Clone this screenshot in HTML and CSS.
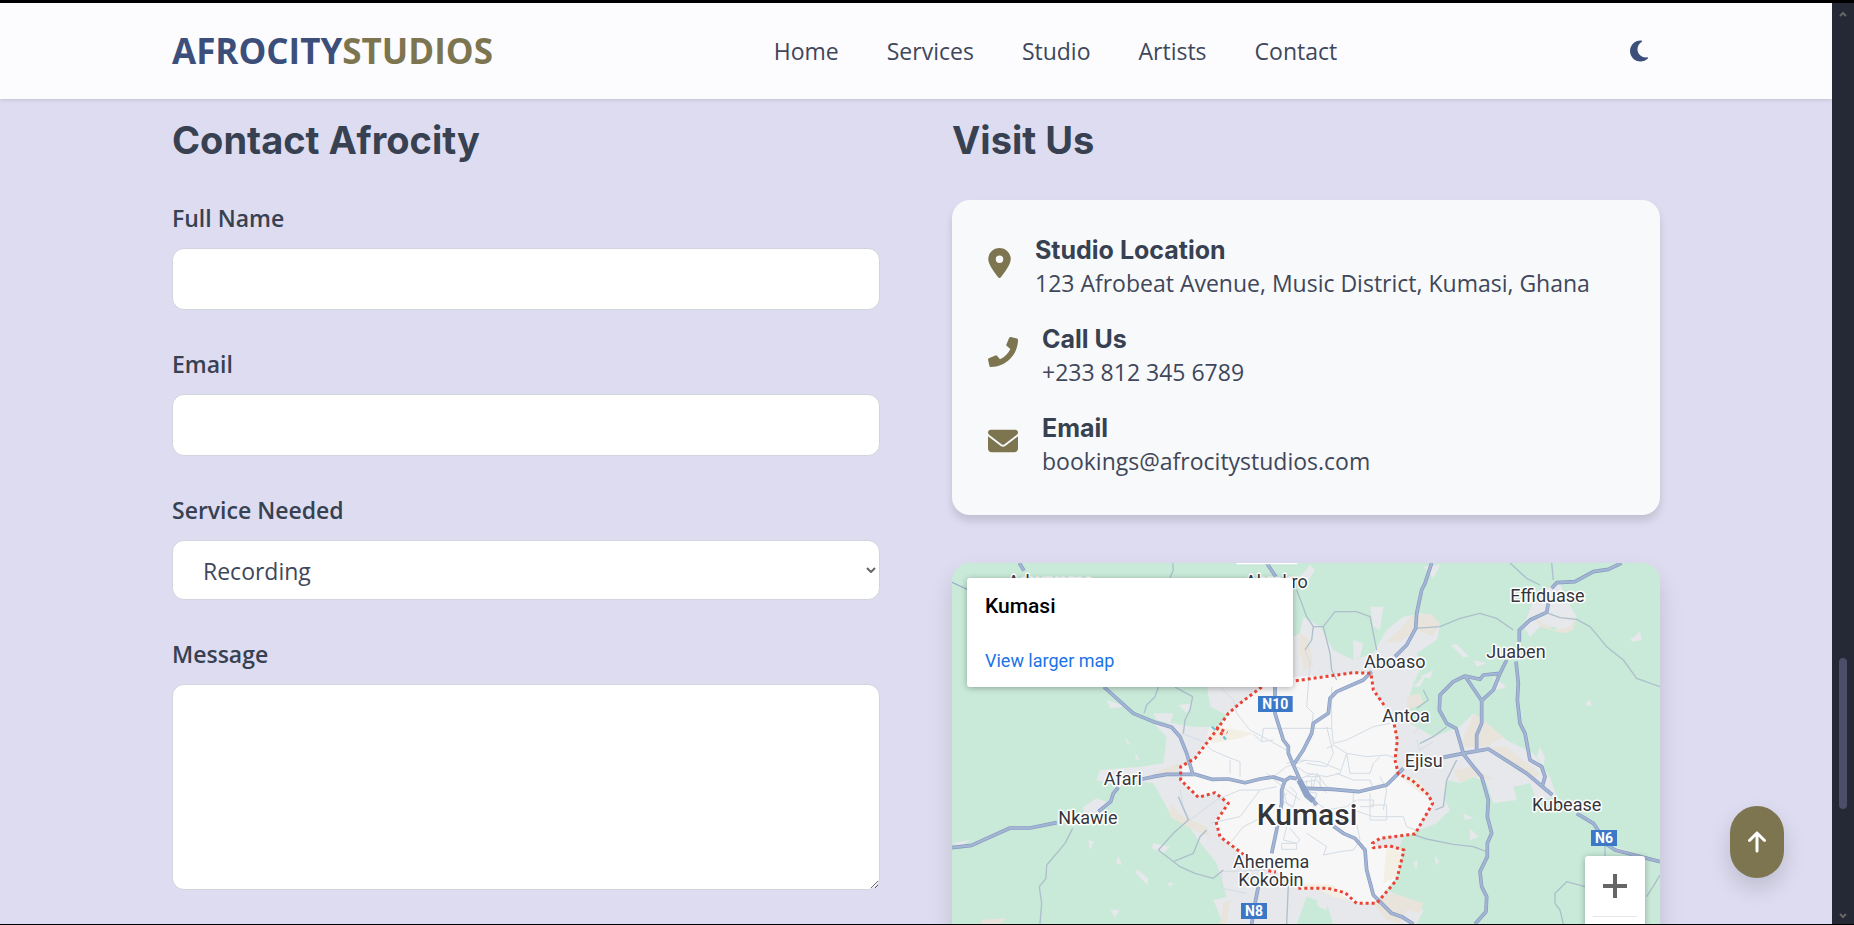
FILE: index.html
```html
<!DOCTYPE html>
<html lang="en">
<head>
<meta charset="utf-8">
<title>Afrocity Studios</title>
<meta name="viewport" content="width=device-width, initial-scale=1">
<link rel="stylesheet" href="styles.css">
</head>
<body>
<div class="window">
  <div class="page">
    <header class="navbar">
      <div class="container navbar-inner">
        <a class="logo" href="#">AFROCITY<span class="logo-accent">STUDIOS</span></a>
        <nav class="nav-links">
          <a href="#home">Home</a>
          <a href="#services">Services</a>
          <a href="#studio">Studio</a>
          <a href="#artists">Artists</a>
          <a href="#contact">Contact</a>
        </nav>
        <button class="theme-toggle" type="button" aria-label="Toggle dark mode">
          <svg class="icon-moon" viewBox="0 0 384 512"><path d="M223.5 32C100 32 0 132.300 0 256S100 480 223.500 480c60.600 0 115.500-24.200 155.800-63.400c5-4.900 6.300-12.500 3.100-18.700s-10.100-9.700-17-8.500c-9.800 1.700-19.800 2.600-30.100 2.600c-96.900 0-175.500-78.800-175.500-176c0-65.800 36-123.100 89.300-153.300c6.100-3.500 9.200-10.500 7.700-17.300s-7.300-11.900-14.300-12.500c-6.300-.5-12.600-.8-19-.8z"/></svg>
        </button>
      </div>
    </header>

    <main class="container contact" id="contact">
      <section class="column">
        <h2>Contact Afrocity</h2>
        <form class="form">
          <div class="field">
            <label for="name">Full Name</label>
            <input class="control" id="name" type="text">
          </div>
          <div class="field">
            <label for="email">Email</label>
            <input class="control" id="email" type="email">
          </div>
          <div class="field">
            <label for="service">Service Needed</label>
            <div class="select-wrap">
              <select class="control select" id="service">
                <option>Recording</option>
                <option>Mixing</option>
                <option>Mastering</option>
              </select>
              <svg class="select-arrow" viewBox="0 0 10 6"><path d="M1 1l4 4 4-4"/></svg>
            </div>
          </div>
          <div class="field">
            <label for="message">Message</label>
            <textarea class="control message" id="message"></textarea>
          </div>
        </form>
      </section>

      <section class="column">
        <h2>Visit Us</h2>
        <div class="card">
          <div class="info">
            <svg class="info-icon pin" viewBox="0 0 384 512"><path d="M215.700 499.200C267 435 384 279.400 384 192C384 86 298 0 192 0S0 86 0 192c0 87.400 117 243 168.300 307.200c12.300 15.300 35.100 15.300 47.400 0zM192 128a64 64 0 1 1 0 128 64 64 0 1 1 0-128z"/></svg>
            <div>
              <h3>Studio Location</h3>
              <p>123 Afrobeat Avenue, Music District, Kumasi, Ghana</p>
            </div>
          </div>
          <div class="info">
            <svg class="info-icon" viewBox="0 0 512 512"><path d="M493.400 24.600l-104-24c-11.300-2.600-22.900 3.300-27.500 13.900l-48 112c-4.200 9.800-1.400 21.300 6.900 28l60.600 49.600c-36 76.700-98.900 140.500-177.200 177.200l-49.600-60.600c-6.800-8.300-18.200-11.100-28-6.900l-112 48C3.900 366.500-2 378.100.6 389.400l24 104C27.100 504.200 36.700 512 48 512c256.100 0 464-207.500 464-464 0-11.200-7.700-20.900-18.600-23.400z"/></svg>
            <div>
              <h3>Call Us</h3>
              <p>+233 812 345 6789</p>
            </div>
          </div>
          <div class="info">
            <svg class="info-icon" viewBox="0 0 512 512"><path d="M48 64C21.500 64 0 85.500 0 112c0 15.100 7.100 29.300 19.200 38.400L236.800 313.600c11.400 8.500 27 8.500 38.400 0L492.800 150.400c12.100-9.100 19.200-23.300 19.200-38.400c0-26.500-21.500-48-48-48H48zM0 176V384c0 35.300 28.700 64 64 64H448c35.300 0 64-28.700 64-64V176L294.400 339.200c-22.800 17.100-54 17.100-76.800 0L0 176z"/></svg>
            <div>
              <h3>Email</h3>
              <p>bookings@afrocitystudios.com</p>
            </div>
          </div>
        </div>

        <div class="map">
          <svg class="map-canvas" viewBox="36 39 2124 1323" role="img" aria-label="Map of Kumasi">
            <rect class="m-land" x="36" y="39" width="2124" height="1323"/>
            <!-- built-up areas -->
            <g class="m-urban">
              <path d="M800 400L900 330L1080 250L1090 200L1140 230L1180 300L1240 330L1300 310L1340 240L1390 200L1450 190L1500 230L1490 270L1430 310L1440 360L1420 400L1400 470L1410 520L1480 560L1560 530L1600 490L1640 520L1700 570L1780 610L1830 680L1850 740L1790 750L1770 700L1720 710L1730 750L1660 760L1640 700L1600 680L1560 700L1520 690L1510 740L1530 780L1490 820L1440 840L1390 860L1360 940L1340 1020L1400 1050L1450 1080L1430 1122H1180L1160 1060L1100 1040L1070 1122H850L820 1050L860 1040L830 940L790 890L740 820L690 790L640 700L560 690L540 710L470 690L480 660L600 650L670 640L680 560L640 520L700 520L760 530L830 530L870 500L810 470Z"/>
              <path d="M1750 230L1780 150L1830 110L1860 100L1880 150L1910 200L1880 250L1840 230L1800 230L1770 260Z"/>
              <path d="M1290 170L1330 170L1320 240L1300 230Z"/>
              <path d="M500 450L560 470L510 475ZM640 490L700 490L690 520L650 510ZM555 560L572 585L560 580ZM585 605L598 630L588 628ZM445 870L462 875L450 900ZM535 915L545 945L528 940ZM590 958L625 985L622 1005L588 970ZM510 1078L538 1080L525 1104ZM682 998L700 1000L690 1012ZM430 770L470 745L500 755L480 800L430 800ZM715 465L760 460L740 490ZM640 880L690 890L670 910L635 895Z"/>
              <path d="M1532 285L1550 282L1588 320L1570 322ZM1440 380L1480 360L1470 385ZM1600 330L1640 340L1610 350ZM1790 250L1830 245ZM2070 270L2100 245L2105 270L2080 275ZM1940 455L1950 450L1956 467L1938 468ZM1900 1015L1910 985ZM1420 935L1434 932L1428 962ZM1484 915L1498 935L1488 945ZM1590 835L1615 860L1590 870ZM1570 790L1600 805L1575 810ZM1240 270L1270 280L1260 320L1240 330ZM1300 310L1340 325L1330 340ZM1800 590L1815 620L1810 650L1790 620ZM1660 380L1700 410L1670 420ZM1420 410L1460 370L1440 410ZM1130 1050L1165 1045L1160 1080L1135 1070ZM2030 890L2110 920L2030 910ZM1450 50L1500 45L1480 85ZM36 39L60 39L36 60ZM1080 80L1110 45L1125 60L1100 100ZM40 880L90 870L60 890Z"/>
            </g>
            <g class="m-sand">
              <path d="M1380 240L1410 200L1470 190L1500 220L1480 260L1430 240L1380 275L1330 280ZM1600 490L1640 520L1690 560L1640 590L1560 590ZM1650 590L1700 590L1800 670L1780 690L1700 640ZM1540 660L1600 650L1660 690L1600 680L1560 700ZM1360 1030L1450 1060L1440 1090L1400 1080L1380 1122L1340 1110L1290 1050ZM120 1110L200 1105L180 1122H130ZM1400 440L1440 430L1450 460L1400 480ZM690 760L730 800L800 830L810 860L760 840L690 800ZM1080 270L1110 290L1120 350L1090 360ZM1780 200L1840 240L1890 230L1910 200L1900 240L1870 250L1800 230ZM850 1060L870 1050L860 1122H840ZM640 670L715 640L715 670ZM1080 330V250L1110 270Z"/>
            </g>
            <!-- city limits -->
            <path class="m-city" d="M1000 385L1290 368L1310 440L1365 520L1370 620L1375 670L1420 690L1480 760L1420 852L1330 860L1295 885L1330 893L1390 900L1370 985L1330 1030L1300 1060L1250 1062L1200 1035L1140 1018H1080L1010 965L900 910L840 860L825 810L865 760L820 728L775 740L725 700V650L765 625L830 540L865 490Z"/>
            <path class="m-farm" d="M810 530L880 538L940 550L900 565L860 572L820 580L800 560Z"/>
            <path class="m-farm" d="M1380 680L1430 685L1470 740L1440 730ZM1340 895L1385 905L1370 980L1330 1000L1335 940ZM1090 1000L1180 1005L1220 1050L1180 1040L1140 1020L1080 1015Z"/>
            <!-- minor streets -->
            <g class="m-street" transform="translate(600 30)">
              <path d="M370 505H575M370 505L365 545L400 540M365 545L340 522M125 520L190 545L215 570L260 590L300 605V650M270 600V640M240 380L280 420L290 460L330 510L440 570M495 270L510 310L500 440L520 460L515 500M575 380V500L580 550L620 540L700 500L750 490M560 500L580 580L560 620L500 610M620 580L680 590L740 585L770 595M440 610L480 600L540 605L600 630M560 565L580 555L620 580L600 640L560 650L500 640L470 620M500 650H540V690L500 680M530 640L560 680L600 690M620 580L630 640L690 640L700 610L720 590M590 640L640 660L690 660L700 690M640 690V750L700 770M655 720H700V740H660M690 700V780H740V735H690M700 770L790 770L800 800L840 815M720 650L740 690L730 750M120 690L130 740L150 780M150 780L230 720L300 690L360 690L410 680M210 790L300 770L360 690M270 850L310 800L370 770M430 690L440 730L480 760M450 680L470 700L460 740L420 720L440 700M520 720L560 750L620 740L650 720M440 800L430 840L470 850L480 840L450 805M425 850H470V868H425ZM500 820L560 860L550 885L600 875L640 870L660 840L650 790L600 780M400 650L440 620L500 600M380 640L440 690L480 720M245 930V985L320 1000M250 935L380 930M820 520L850 490L900 510M830 540L840 570L880 545"/>
              <path d="M470 660L520 640M470 670L530 660L560 700M480 690L530 700L520 740M500 660V700M515 655V690M530 640L520 680"/>
            </g>
            <!-- secondary roads -->
            <g class="m-minor">
              <path d="M698 39L700 60L690 84M655 411L645 440L620 465L612 490M705 411L735 428L758 440L750 480L735 510L730 550M398 835L375 880L350 910L320 945L318 985L298 1010L305 1060L300 1122M655 900L700 850L745 810L715 740M655 900L720 950L765 970L820 985L850 960M700 935L760 910L780 860L800 840"/>
              <path d="M36 97L60 108L82 118" class="m-mid"/>
              <g transform="translate(600 30)"><path d="M470 90L485 130L500 170L520 200H550L585 155L650 155L690 170L710 270M520 200L515 240L495 270M550 200L570 280L575 330L590 360M445 975L440 1092M850 390L865 420L830 445"/></g>
              <g transform="translate(1080 0)"><path d="M343 235L420 230L480 205L540 190L590 205L640 240M630 39L680 85L720 105M745 190L780 203L830 208L870 230L920 290L970 330L1010 385L1080 410M755 39L760 90M343 855L380 867L460 883L520 890L560 905M405 780L430 770L440 690L470 630M360 580L400 560L440 530M915 880V920M855 1010L800 995L765 1030V1060L780 1080L790 1122M1080 975L1065 1000L1040 1040"/></g>
            </g>
            <!-- main roads -->
            <g class="m-road-edge"><g id="roads">
              <path d="M238 39L252 62M980 39L1010 84M492 411L580 490L640 515L695 532L720 560L740 610L760 678M36 893L95 886L210 834L270 834L350 818M475 785L512 755L520 730L535 712M605 688L640 680L680 673H765L815 688L865 687L915 698L960 687L1000 681L1035 692L1050 682L1070 686"/>
              <path d="M1035 692L1025 720V760L1012 830L995 910M955 1010L945 1060L935 1122M1005 411L1005 490L1030 570L1045 590V610L1060 645L1080 690L1100 730M1060 645L1090 600L1115 550L1120 520L1165 490L1170 445L1190 425L1270 390L1295 365"/>
              <path d="M1475 39L1455 100L1445 120L1430 190L1427 235L1400 285L1365 320M1100 715L1180 718L1255 725L1340 705L1375 670L1390 655"/>
              <path d="M1180 828L1210 850L1245 865L1275 900L1280 960L1300 1035L1355 1090L1385 1100L1420 1122M1085 700L1110 740L1130 765"/>
              <g transform="translate(1080 0)">
                <path d="M965 39L925 58L880 65L825 95L770 98L755 115M745 160L740 187L690 210L658 240V275M648 335L655 400L652 450L660 520L675 550L690 630L725 650L735 680L728 705M620 330L600 370L550 375L540 388L495 378L460 395L420 435L418 480L440 520L468 535L490 610M495 378L545 452L545 520L530 555V600M600 370L580 420L545 452M430 622L490 610L565 597L680 670L757 735M490 612L520 650L545 680L565 750L562 800L575 850L562 880V920L540 965L545 1010L560 1040L558 1085L525 1122M830 790L880 820L900 850M915 880L945 900L1080 935"/>
              </g>
            </g></g>
            <use href="#roads" class="m-road"/>
            <path class="m-trunk" d="M1078 690L1100 735L1120 752"/>
            <!-- boundary -->
            <path class="m-border" d="M965 411L900 460L865 490L830 540L765 625L722 650L722 690L775 742L825 728L865 760L828 815L840 860L910 913M985 962L1008 966M1075 1015H1165L1215 1028L1250 1060H1310L1370 990L1392 900L1350 888L1300 893L1297 880L1320 865L1425 852L1478 760L1465 735L1415 690L1375 672L1365 630L1372 570L1362 520M1332 465L1300 420L1293 370L1240 368L1062 393"/>
            <path class="m-border" d="M828 532L862 548M842 555L850 538"/>
            <path class="m-water" d="M815 530L826 540M850 560L858 568"/>
            <path class="m-halo" d="M890 40H1072"/>

            <!-- place names -->
            <g class="m-label">
              <text x="203" y="115">Adugyama</text>
              <text x="915" y="115">Abrakro</text>
              <text x="491" y="704">Afari</text>
              <text x="355" y="821">Nkawie</text>
              <text x="879" y="954">Ahenema</text>
              <text x="895" y="1008">Kokobin</text>
              <text x="1272" y="353">Aboaso</text>
              <text x="1327" y="515">Antoa</text>
              <text x="1394" y="652">Ejisu</text>
              <text x="1711" y="156">Effiduase</text>
              <text x="1639" y="323">Juaben</text>
              <text x="1776" y="783">Kubease</text>
              <text class="m-city-name" x="950" y="824">Kumasi</text>
            </g>
            <g class="m-shield">
              <rect x="954" y="438" width="104" height="48"/><text x="1006" y="477">N10</text>
              <rect x="903" y="1059" width="78" height="48"/><text x="942" y="1098">N8</text>
              <rect x="1953" y="840" width="78" height="48"/><text x="1992" y="879">N6</text>
            </g>
          </svg>
          <div class="place-card">
            <strong>Kumasi</strong>
            <a href="#map">View larger map</a>
          </div>
          <div class="zoom-controls">
            <button type="button" aria-label="Zoom in"><svg viewBox="0 0 24 24"><path d="M12 0V24M0 12H24"/></svg></button>
            <button type="button" aria-label="Zoom out"><svg viewBox="0 0 24 24"><path d="M0 12H24"/></svg></button>
          </div>
        </div>
      </section>
    </main>

    <button class="to-top" type="button" aria-label="Back to top">
      <svg viewBox="0 0 384 512"><path d="M214.600 41.400c-12.500-12.500-32.800-12.500-45.300 0l-160 160c-12.500 12.500-12.500 32.800 0 45.300s32.800 12.500 45.300 0L160 141.200V448c0 17.700 14.300 32 32 32s32-14.300 32-32V141.200L329.400 246.600c12.500 12.500 32.800 12.500 45.300 0s12.500-32.800 0-45.300l-160-160z"/></svg>
    </button>
  </div>

  <div class="scrollbar">
    <svg viewBox="0 0 8 6"><path d="M1 5l3-3 3 3"/></svg>
    <div class="scroll-track"><div class="scroll-thumb"></div></div>
    <svg viewBox="0 0 8 6"><path d="M1 1l3 3 3-3"/></svg>
  </div>
</div>
</body>
</html>
```
FILE: styles.css
```css
* {
  box-sizing: border-box;
  margin: 0;
}

body {
  background: #000;
  color: #374151;
  font-family: "Open Sans", "Noto Sans", sans-serif;
  font-size: 23px;
  line-height: 36px;
}

.window {
  display: flex;
  height: 100vh;
  padding: 3px 0 1px;
}

.page {
  position: relative;
  flex: 1;
  min-width: 0;
  overflow: hidden;
  background: #dddcf0;
}

.container {
  width: 100%;
  max-width: 1536px;
  margin: 0 auto;
  padding: 0 24px;
}

/* navbar */
.navbar {
  position: relative;
  background: #fcfcff;
  box-shadow: 0 1px 4px rgba(0, 0, 0, 0.12);
}

.navbar-inner {
  display: flex;
  align-items: center;
  justify-content: space-between;
  height: 96px;
}

.logo {
  color: #3b4f7a;
  font-size: 35px;
  font-weight: 700;
  text-decoration: none;
}

.logo-accent {
  color: #7c7550;
}

.nav-links {
  display: flex;
  gap: 48px;
}

.nav-links a {
  color: #40475a;
  text-decoration: none;
}

.theme-toggle {
  display: flex;
  padding: 12px;
  border: 0;
  background: none;
}

.icon-moon {
  width: 18px;
  height: 24px;
  fill: #3b4f7a;
}

/* contact section */
.contact {
  display: grid;
  grid-template-columns: 1fr 1fr;
  gap: 72px;
  padding-top: 17px;
}

h2,
h3 {
  color: #374151;
  font-family: Inter, "Open Sans", sans-serif;
  font-weight: 700;
}

h2 {
  margin-bottom: 36px;
  font-size: 38px;
  line-height: 48px;
}

.form {
  display: grid;
  gap: 36px;
}

.field {
  display: grid;
  gap: 12px;
}

.field label {
  font-weight: 600;
}

.control {
  display: block;
  width: 100%;
  height: 62px;
  padding: 12px 30px;
  border: 1px solid #d1d5db;
  border-radius: 12px;
  background: #fff;
  color: #40475a;
  font: inherit;
}

.select-wrap {
  position: relative;
}

.select {
  height: 60px;
  appearance: none;
}

.select-arrow {
  position: absolute;
  top: 27px;
  right: 4px;
  width: 10px;
  height: 6px;
  fill: none;
  stroke: #666;
  stroke-width: 2;
}

.message {
  height: 206px;
}

/* studio details */
.card {
  display: grid;
  gap: 24px;
  margin-bottom: 48px;
  padding: 36px;
  border-radius: 18px;
  background: #f8f9fb;
  box-shadow: 0 6px 9px rgba(0, 0, 0, 0.12);
}

.info {
  display: flex;
  gap: 24px;
}

.info-icon {
  flex: none;
  width: 30px;
  height: 30px;
  margin-top: 12px;
  fill: #7c7550;
}

.pin {
  width: 23px;
}

h3 {
  font-size: 25px;
  line-height: 29px;
}

.info p {
  color: #40475a;
}

/* map */
.map {
  position: relative;
  overflow: hidden;
  border-radius: 18px;
  box-shadow: 0 12px 24px rgba(0, 0, 0, 0.12);
}

.map-canvas {
  display: block;
  width: 100%;
}

.m-land { fill: #c9ead8; }
.m-urban { fill: #e6e8eb; }
.m-sand { fill: #e9e4db; }
.m-city { fill: #f7f7f7; }
.m-farm { fill: #f3efe4; }

.m-street,
.m-minor,
.m-road-edge,
.m-road,
.m-trunk,
.m-border,
.m-halo,
.m-water {
  fill: none;
  stroke-linejoin: round;
}

.m-street { stroke: #d3dce5; stroke-width: 3; }
.m-minor { stroke: #adbfcc; stroke-width: 4; }
.m-mid { stroke: #9aabca; }
.m-road-edge { stroke: #869bc2; stroke-width: 11; }
.m-road { stroke: #a4b5d4; stroke-width: 7; }
.m-trunk { stroke: #8ea2c8; stroke-width: 18; }
.m-border { stroke: #ea4335; stroke-width: 9; stroke-dasharray: 9 9; }
.m-halo { stroke: #fff; stroke-width: 6; }
.m-water { stroke: #6cc8d8; stroke-width: 7; }

.m-label {
  fill: #33363b;
  stroke: #fff;
  stroke-width: 9;
  stroke-linejoin: round;
  paint-order: stroke;
  font-family: Roboto, sans-serif;
  font-size: 54px;
}

.m-city-name {
  font-size: 90px;
  font-weight: 500;
}

.m-shield {
  fill: #3c78c8;
}

.m-shield text {
  fill: #fff;
  font-family: Roboto, sans-serif;
  font-size: 42px;
  font-weight: 700;
  text-anchor: middle;
}

.place-card {
  position: absolute;
  top: 15px;
  left: 15px;
  display: flex;
  flex-direction: column;
  gap: 27px;
  width: 326px;
  height: 109px;
  padding: 15px 18px;
  border-radius: 3px;
  background: #fff;
  box-shadow: 0 1px 6px rgba(0, 0, 0, 0.3);
  font-family: Roboto, sans-serif;
  font-size: 18px;
  line-height: 27px;
}

.place-card strong {
  color: #000;
  font-size: 21px;
  font-weight: 500;
}

.place-card a {
  color: #1a73e8;
  text-decoration: none;
}

.zoom-controls {
  position: absolute;
  top: 293px;
  right: 15px;
  width: 60px;
  border-radius: 3px;
  background: #fff;
  box-shadow: 0 1px 6px rgba(0, 0, 0, 0.3);
}

.zoom-controls button {
  display: grid;
  place-items: center;
  width: 44px;
  height: 60px;
  margin: 0 auto;
  padding: 0;
  border: 0;
  background: none;
}

.zoom-controls button + button {
  border-top: 1px solid #e6e6e6;
}

.zoom-controls svg {
  width: 24px;
  height: 24px;
  stroke: #666;
  stroke-width: 4;
}

/* back to top */
.to-top {
  position: absolute;
  right: 48px;
  bottom: 46px;
  display: grid;
  place-items: center;
  width: 54px;
  height: 72px;
  padding: 0;
  border: 0;
  border-radius: 27px;
  background: #7c7550;
  box-shadow: 0 10px 22px rgba(0, 0, 0, 0.14);
}

.to-top svg {
  width: 18px;
  height: 24px;
  overflow: visible;
  fill: #fff;
}

/* scrollbar */
.scrollbar {
  display: flex;
  flex-direction: column;
  align-items: center;
  gap: 10px;
  width: 22px;
  padding: 8px 0 5px;
  background: #252835;
}

.scrollbar svg {
  width: 8px;
  height: 6px;
  fill: none;
  stroke: #666;
  stroke-width: 2;
}

.scroll-track {
  display: flex;
  flex-direction: column;
  flex: 1;
}

.scroll-track::before {
  content: "";
  flex: 631;
}

.scroll-track::after {
  content: "";
  flex: 94;
}

.scroll-thumb {
  flex: 151;
  width: 8px;
  border-radius: 4px;
  background: #4b4e69;
}
```
